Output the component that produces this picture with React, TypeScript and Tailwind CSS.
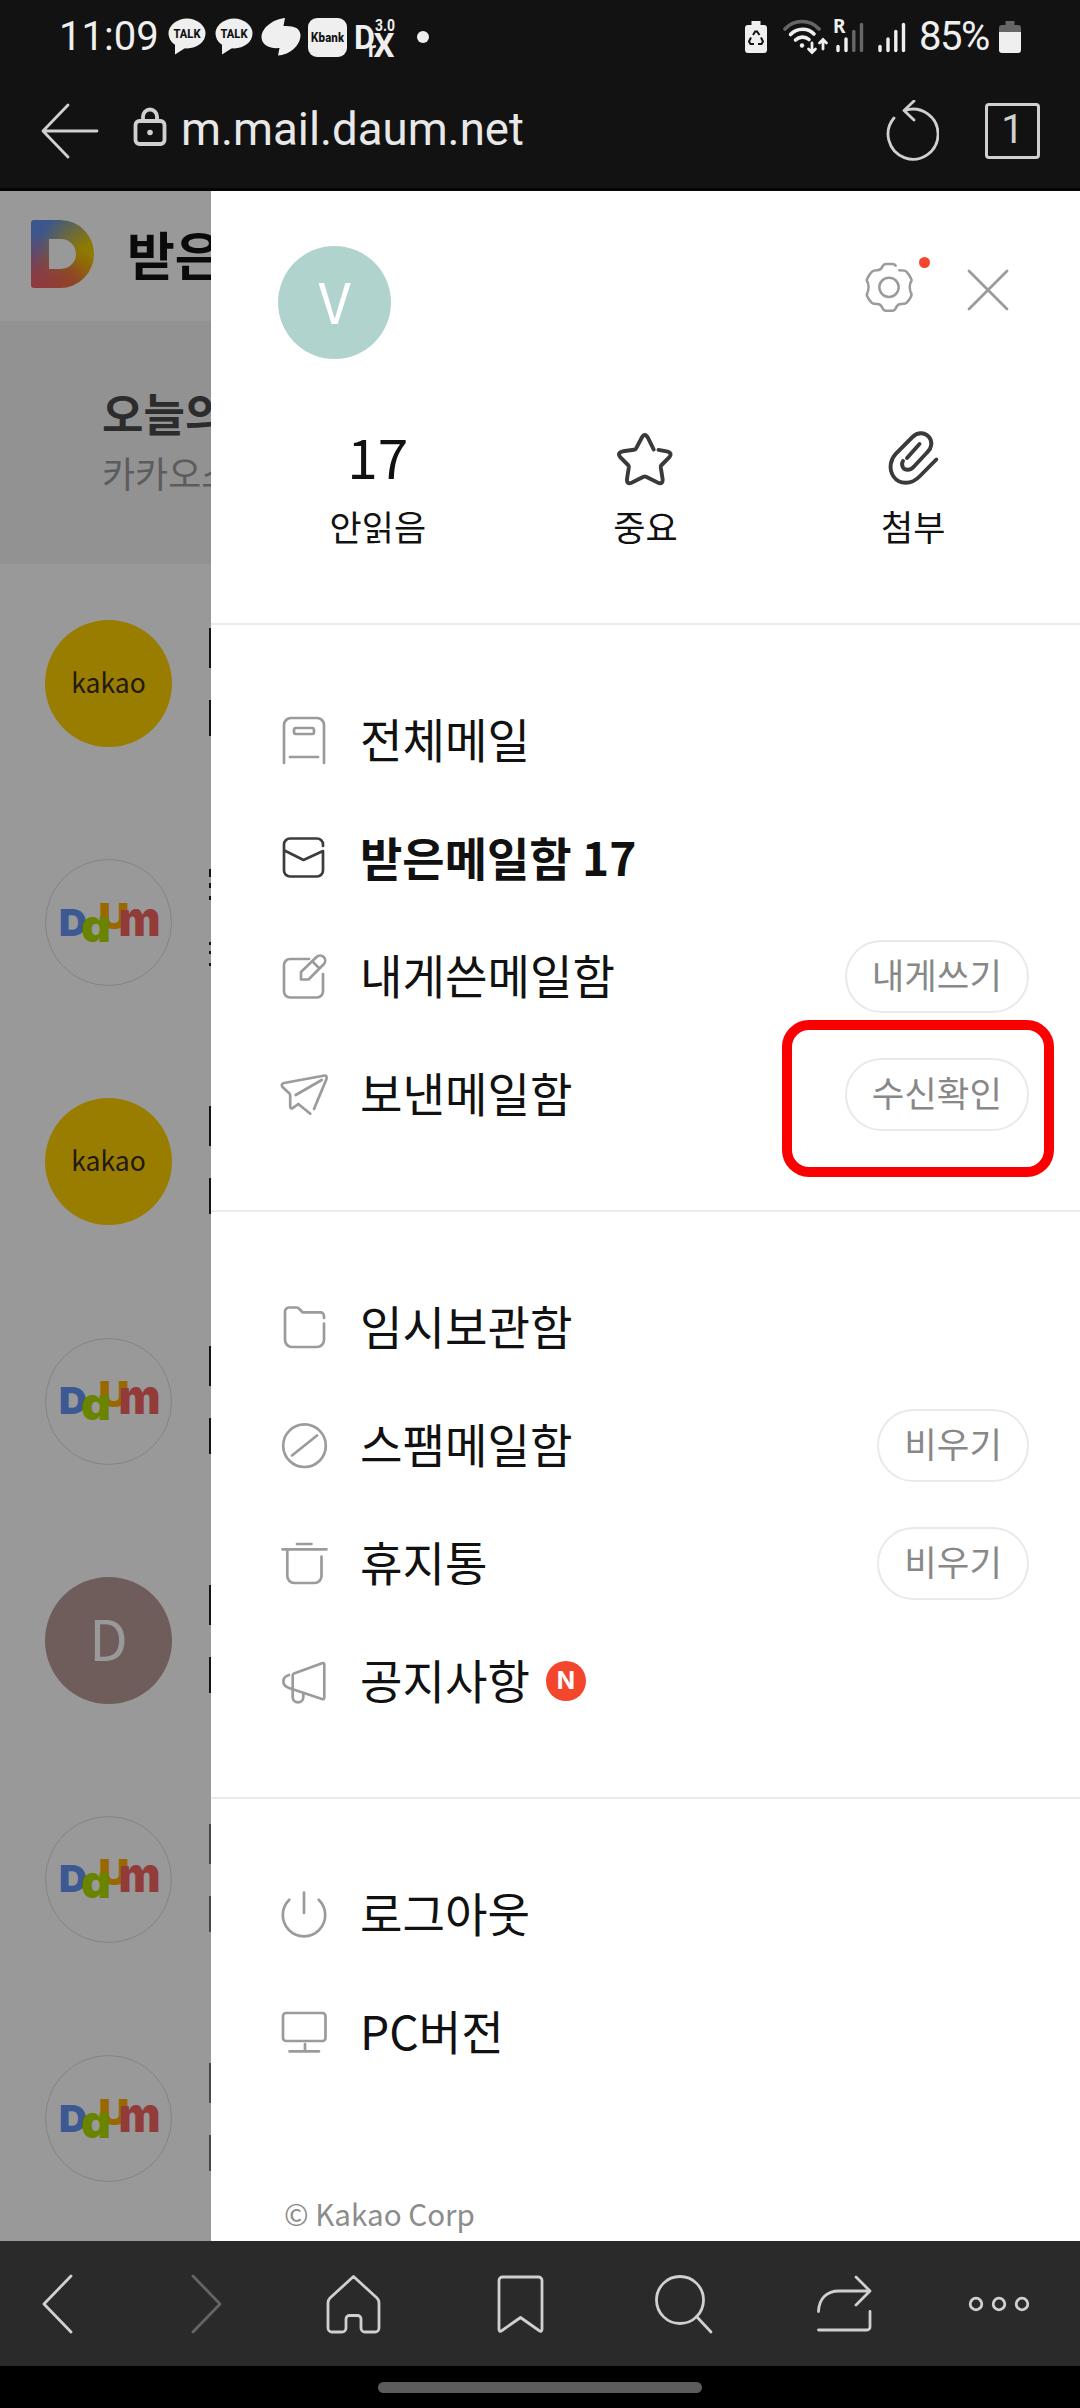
import React from "react";
import clsx from "clsx";

// --- Status bar icons ---
function TalkIcon() {
  return (
    <svg width="38" height="38" viewBox="0 0 38 38">
      <ellipse cx="19" cy="15.5" rx="18.5" ry="15" fill="#efefef" />
      <path d="M7 24v12.5l11-7z" fill="#efefef" />
      <text x="19" y="20" textAnchor="middle" textLength="27" lengthAdjust="spacingAndGlyphs" fontFamily="Roboto, sans-serif" fontWeight="800" fontSize="13.5" fill="#121212">TALK</text>
    </svg>
  );
}

function SignalBars({ level }: { level: number }) {
  return (
    <svg width="28" height="32" viewBox="0 0 28 32" strokeWidth="3.4" strokeLinecap="round">
      <path d="M2 25.5v4" stroke={level > 0 ? "#efefef" : "#666"} />
      <path d="M10 18v11.5" stroke={level > 1 ? "#efefef" : "#666"} />
      <path d="M17.8 10.5v19" stroke={level > 2 ? "#efefef" : "#666"} />
      <path d="M25.5 3.5v26" stroke={level > 3 ? "#efefef" : "#666"} />
    </svg>
  );
}

function StatusBar() {
  return (
    <div className="flex h-[74px] items-center px-[59px] font-[Roboto,sans-serif] text-[#efefef]">
      <span className="w-[109px] text-[40px] leading-none">11:09</span>
      <TalkIcon />
      <span className="ml-[9px]"><TalkIcon /></span>
      <svg className="ml-2" width="40" height="40" viewBox="0 0 40 40" fill="#efefef">
        <path d="M24 1L22.5 9C33 8.5 39 11 39.5 18C39.5 29 28 38 17 38.5L18.5 31C7 32 .5 27 .5 20C1 10 13 2 24 1Z" />
      </svg>
      <span className="ml-[7px] flex h-[39px] w-[39px] items-center justify-center rounded-[9px] bg-[#efefef]">
        <svg width="35" height="20" viewBox="0 0 35 20">
          <text x="17.5" y="14.5" textAnchor="middle" textLength="33" lengthAdjust="spacingAndGlyphs" fontFamily="Inter, sans-serif" fontWeight="800" fontSize="12.5" fill="#121212">Kbank</text>
        </svg>
      </span>
      <svg className="ml-2 overflow-visible" width="42" height="42" viewBox="0 0 42 42" fill="#efefef" fontFamily="Roboto, sans-serif" fontWeight="700">
        <text x="-1" y="33" fontSize="33" textLength="21" lengthAdjust="spacingAndGlyphs">D</text>
        <text x="20" y="15" fontSize="17" textLength="20" lengthAdjust="spacingAndGlyphs">3.0</text>
        <text x="18.5" y="41" fontSize="34" textLength="21" lengthAdjust="spacingAndGlyphs">X</text>
        <text x="13" y="41" fontSize="22">r</text>
      </svg>
      <span className="ml-[20px] h-3 w-3 rounded-full bg-[#efefef]" />
      <span className="flex-1" />
      {/* Battery saver */}
      <svg width="22" height="32" viewBox="0 0 22 32">
        <path d="M6.500 0h9v4H19a3 3 0 0 1 3 3v22a3 3 0 0 1-3 3H3a3 3 0 0 1-3-3V7a3 3 0 0 1 3-3h3.500z" fill="#efefef" />
        <path d="M8 14l2.200-3.500h1.800L14.500 14M16 16.500l2 4-1.500 2.500H13M9 23H5.500L4 20.500l2-4" stroke="#121212" strokeWidth="2" fill="none" />
      </svg>
      <svg className="ml-4" width="46" height="36" viewBox="0 0 46 36" fill="none" stroke="#efefef" strokeWidth="3.6" strokeLinecap="round">
        <path d="M2 10C11 0 27 0 36 10" stroke="#666" />
        <path d="M7.500 15.500C14 8.500 25 8.500 31 15" />
        <path d="M12.500 21C16 17.500 22 17 26 20.500" />
        <circle cx="19" cy="26.5" r="2.2" fill="#efefef" stroke="none" />
        <path d="M29 24v9M25.500 30l3.500 3.500 3.500-3.500M40 30v-9M36.500 24l3.500-3.500 3.500 3.500" strokeWidth="2.8" />
      </svg>
      <span className="relative ml-[7px]">
        <SignalBars level={2} />
        <span className="absolute -left-[3px] -top-[3px] bg-[#121212] font-['Noto_Sans',sans-serif] text-[19px] font-bold leading-[17px]">R</span>
      </span>
      <span className="ml-[14px]"><SignalBars level={4} /></span>
      <span className="ml-[13px] w-[80px] text-[40px] leading-none tracking-[-1.5px]">85%</span>
      <svg width="22" height="32" viewBox="0 0 22 32">
        <path d="M6.500 0h9v4H19a3 3 0 0 1 3 3v4H0V7a3 3 0 0 1 3-3h3.500z" fill="#666" />
        <path d="M0 11h22v18a3 3 0 0 1-3 3H3a3 3 0 0 1-3-3z" fill="#efefef" />
      </svg>
    </div>
  );
}

function AddressBar() {
  return (
    <div className="flex h-[114px] items-center pl-[40px] pr-[40px] font-[Roboto,sans-serif]">
      <svg width="60" height="56" viewBox="0 0 60 56" fill="none" stroke="#d0d0d0" strokeWidth="2.8" strokeLinecap="round" strokeLinejoin="round">
        <path d="M28 2L3 28l25 26M3 28h54" />
      </svg>
      <svg className="-mt-2 ml-[33px]" width="34" height="40" viewBox="0 0 34 40" fill="none" stroke="#d0d0d0" strokeWidth="3.8">
        <rect x="2.5" y="14" width="29" height="23" rx="4" />
        <path d="M10 14V9.500a7 7 0 0 1 14 0V14" />
        <circle cx="17" cy="25.5" r="2.8" fill="#d0d0d0" stroke="none" />
      </svg>
      <span className="-mt-[3px] ml-[14px] flex-1 text-[45.6px] leading-none text-[#e8e8e8]">m.mail.daum.net</span>
      <svg width="54" height="62" viewBox="0 0 54 62" fill="none" stroke="#d0d0d0" strokeWidth="2.8" strokeLinecap="round" strokeLinejoin="round">
        <path d="M9 18A25 25 0 1 0 20 10.500M29 1L19 10.500l10 9.500" />
      </svg>
      <span className="ml-[46px] flex h-[56px] w-[55px] items-center justify-center rounded-[4px] border-[3px] border-[#d0d0d0] pb-[2px] text-[40px] leading-none text-[#d0d0d0]">1</span>
    </div>
  );
}

// --- Mail list behind the drawer ---
function DaumLogo() {
  return (
    <svg className="overflow-visible" width="100" height="44" viewBox="0 0 100 44" fontFamily="Inter, sans-serif" fontWeight="900" strokeLinejoin="round">
      <text x="39.5" y="28" fontSize="35" textLength="31" lengthAdjust="spacingAndGlyphs" fill="#ffb000">U</text>
      <text x="0" y="35" fontSize="37" textLength="28" lengthAdjust="spacingAndGlyphs" fill="#6495f5">D</text>
      <text x="59.5" y="35" fontSize="48" textLength="42" lengthAdjust="spacingAndGlyphs" fill="#f4645f">m</text>
      <text className="[font-feature-settings:'cv11']" x="22" y="41" fontSize="45" textLength="30" lengthAdjust="spacingAndGlyphs" fill="#b2dc00">a</text>
    </svg>
  );
}

const mails = [
  { kind: "kakao", edge: "bg-[#222]" },
  { kind: "daum", edge: "bg-[#222]", broken: true },
  { kind: "kakao", edge: "bg-[#222]" },
  { kind: "daum", edge: "bg-[#222]" },
  { kind: "letter", edge: "bg-[#222]" },
  { kind: "daum", edge: "bg-[#777]" },
  { kind: "daum", edge: "bg-[#777]" },
];

function MailListBackdrop() {
  return (
    <div className="relative h-full w-[211px] shrink-0 overflow-hidden bg-white">
      <div className="flex h-[130px] items-center pb-1 pl-[31px]">
        <div className="flex h-[68px] w-[63px] shrink-0 items-center rounded-l-[3px] rounded-r-[34px] bg-[radial-gradient(circle_at_0%_105%,#ee5f6c_10%,transparent_60%),radial-gradient(circle_at_55%_110%,#f27a2c_20%,transparent_58%),radial-gradient(circle_at_105%_62%,#eccc00_25%,transparent_80%),linear-gradient(#6490ec,#8088d8)] pl-[18px]">
          <div className="h-[30px] w-[27px] rounded-r-[15px] bg-white" />
        </div>
        <span className="ml-[33px] whitespace-nowrap text-[52px] font-bold leading-none text-[#111]">받은메일함</span>
      </div>
      <div className="h-[243px] bg-[#f3f3f3] pl-[102px] pt-[65px]">
        <p className="whitespace-nowrap text-[45px] font-bold leading-[54px] text-[#4a4a4a]">오늘의 메일</p>
        <p className="mt-[6px] whitespace-nowrap text-[36px] leading-[52px] text-[#999]">카카오스토리</p>
      </div>
      {mails.map((mail, index) => (
        <div key={index} className="flex h-[239.2px] items-start justify-between pl-[45px] pt-[56px]">
          {mail.kind === "kakao" && (
            <div className="flex h-[127px] w-[127px] items-center justify-center rounded-full bg-[#ffd000] pb-[3px] text-[26.5px] leading-none text-[#3a2a1c]">
              kakao
            </div>
          )}
          {mail.kind === "daum" && (
            <div className="flex h-[127px] w-[127px] items-center justify-center rounded-full border-[1.5px] border-[#dcdcdc]">
              <DaumLogo />
            </div>
          )}
          {mail.kind === "letter" && (
            <div className="flex h-[127px] w-[127px] items-center justify-center rounded-full bg-[#b99b98] pb-[6px] text-[56px] leading-none text-white">
              D
            </div>
          )}
          {/* Sender and subject are hidden by the drawer except for their first pixels */}
          {mail.broken ? (
            <div className="mt-[10px] flex w-[2px] flex-col">
              <span className={clsx("h-[8px] w-[2px]", mail.edge)} />
              <span className={clsx("mt-[6px] h-[5px] w-[2px]", mail.edge)} />
              <span className={clsx("mt-[8px] h-[4px] w-[2px]", mail.edge)} />
              <span className={clsx("mt-[42px] h-[3px] w-[2px]", mail.edge)} />
              <span className={clsx("mt-[6px] h-[3px] w-[2px]", mail.edge)} />
              <span className={clsx("mt-[9px] h-[3px] w-[2px]", mail.edge)} />
            </div>
          ) : (
            <div className="mt-2 flex w-[2px] flex-col gap-8">
              <span className={clsx("h-[40px] w-[2px]", mail.edge)} />
              <span className={clsx("h-[36px] w-[2px]", mail.edge)} />
            </div>
          )}
        </div>
      ))}
      <div className="absolute inset-0 bg-black/40" />
    </div>
  );
}

// --- Drawer ---
const iconPaths: Record<string, React.ReactNode> = {
  all: (
    <>
      <path d="M4 46V8a7 7 0 0 1 7-7H37a7 7 0 0 1 7 7v38M10 40h28" />
      <rect x="14" y="11" width="20" height="6" rx="2" />
    </>
  ),
  inbox: <path d="M43 11V9.500a6 6 0 0 0-6-6H10a6 6 0 0 0-6 6v26a6 6 0 0 0 6 6h27a6 6 0 0 0 6-6V16L23.500 25 4.500 15.500" />,
  self: (
    <>
      <path d="M29 6H10a6 6 0 0 0-6 6v26.500a6 6 0 0 0 6 6h27a6 6 0 0 0 6-6V21" />
      <path d="M21 26.500V19L36.500 4a5 5 0 0 1 7.200 7.200L28.500 26.500zM32.500 8.500l6.500 6.500" />
    </>
  ),
  sent: <path d="M34 38L46.500 8Q47.500 4 43.500 4.800L4 12Q.5 13 2.500 16L9.500 22.500Q10.200 23.500 10.200 25V35.500Q10.500 38.500 13 36.800L18.300 33 30.300 42.700M15.700 24L41.700 9" />,
  draft: <path d="M44 14v-2a3.700 3.700 0 0 0-3.700-3.700H22.500l-3.300-3.500a3.500 3.500 0 0 0-2.500-1.300H9a4 4 0 0 0-4 4V36a7 7 0 0 0 7 7h25a7 7 0 0 0 7-7V19.500" />,
  spam: (
    <>
      <circle cx="24.5" cy="23.7" r="21.3" />
      <path d="M12 33.500L37 13.500" />
    </>
  ),
  trash: <path d="M17 4h14.500M2.500 9.300h44M7.300 9.500V36a7 7 0 0 0 7 7h20.200a7 7 0 0 0 7-7V16.500" />,
  notice: (
    <>
      <path d="M12.700 31V17.500Q12.700 16 14 15.500L42 5.200Q44.300 4.500 44.300 6.500V39.500Q44.300 41.800 42 41L9 30C1 27 2 19 9 17" />
      <path d="M12.700 30v9a5.300 5.300 0 0 0 10.600 0v-4" />
    </>
  ),
  logout: <path d="M9.300 8.800A21.200 21.200 0 1 0 38.700 8.800M24 1.500V22" />,
  pc: (
    <>
      <rect x="3" y="4" width="42.5" height="28" rx="3" />
      <path d="M25 35v7M9.500 42.300h29.500" />
    </>
  ),
};

const sections = [
  [
    { icon: "all", label: "전체메일" },
    { icon: "inbox", label: "받은메일함 17", active: true },
    { icon: "self", label: "내게쓴메일함", action: "내게쓰기" },
    { icon: "sent", label: "보낸메일함", action: "수신확인", marked: true },
  ],
  [
    { icon: "draft", label: "임시보관함" },
    { icon: "spam", label: "스팸메일함", action: "비우기" },
    { icon: "trash", label: "휴지통", action: "비우기" },
    { icon: "notice", label: "공지사항", isNew: true },
  ],
  [
    { icon: "logout", label: "로그아웃" },
    { icon: "pc", label: "PC버전" },
  ],
];

function MenuRow({ item }: any) {
  return (
    <li className="relative flex h-[118px] items-center pl-[69px] pr-[51px]">
      <svg
        className="mt-[2px] shrink-0 overflow-visible"
        width="48"
        height="48"
        viewBox="0 0 48 48"
        fill="none"
        stroke={item.active ? "#3c3c3c" : "#9b9b9b"}
        strokeWidth="2.7"
        strokeLinecap="round"
        strokeLinejoin="round"
      >
        {iconPaths[item.icon]}
      </svg>
      <span className={clsx("ml-[32px] whitespace-nowrap pb-[5px] leading-[54px] text-[#111]", item.active ? "text-[46px] font-bold" : "text-[46.2px]")}>
        {item.label}
      </span>
      {item.isNew && (
        <span className="ml-[16px] flex h-[40px] w-[40px] items-center justify-center rounded-full bg-[#f4462c] font-[Inter,sans-serif] text-[24px] font-bold leading-none text-white">
          N
        </span>
      )}
      {item.action && (
        <button className="ml-auto h-[73px] whitespace-nowrap rounded-full border-2 border-[#e8eaea] px-[25px] pb-[5px] text-[35.4px] leading-none text-[#888]">
          {item.action}
        </button>
      )}
      {item.marked && <span className="absolute -top-[15px] right-[26px] h-[157px] w-[272px] rounded-[27px] border-[10px] border-[#fb0000]" />}
    </li>
  );
}

function Drawer() {
  return (
    <aside className="flex-1 bg-white text-[#111]">
      <header className="flex items-start pl-[67px] pt-[55px]">
        <span className="flex h-[113px] w-[113px] items-center justify-center rounded-full bg-[#b0d3cd] pb-[6px] text-[56px] leading-none text-white">V</span>
        <span className="relative ml-[473px] mt-[15px]">
          <svg width="50" height="53" viewBox="134 124 150 159" fill="none" stroke="#9b9b9b" strokeWidth="7.5" strokeLinecap="round">
            <path d="M229 138Q226 133 219 133H200Q193 133 189 141Q184 152 174 152Q162 152 158 156Q150 164 144 176Q140 182 146 190Q150 203 146 215Q140 224 144 231Q150 243 158 250Q162 253 174 253Q184 253 189 264Q193 273 200 273H219Q226 273 230 264Q235 253 245 253Q257 253 261 250Q269 243 275 231Q279 224 273 215Q269 203 273 190Q279 182 275 176Q269 164 261 156Q257 152 240 152" />
            <circle cx="209" cy="203" r="29" />
          </svg>
          <span className="absolute -right-[16px] -top-[4px] h-[11px] w-[11px] rounded-full bg-[#f4462c]" />
        </span>
        <svg className="ml-[52px] mt-[22px]" width="44" height="44" viewBox="0 0 44 44" stroke="#9b9b9b" strokeWidth="2.8" strokeLinecap="round">
          <path d="M3 3l38 38M41 3L3 41" />
        </svg>
      </header>

      <div className="mt-[66px] grid h-[198px] grid-cols-3 px-[33px] text-center text-[35px]">
        <div>
          <div className="flex h-[68px] items-center justify-center pb-[8px] text-[55px] leading-none">17</div>
          <p className="mt-[7px] leading-[52px]">안읽음</p>
        </div>
        <div>
          <div className="flex h-[68px] items-center justify-center">
            <svg width="60" height="58" viewBox="0 0 60 58" fill="none" stroke="#3a3a3a" strokeWidth="3.9" strokeLinecap="round">
              <path d="M38.700 19.500L33 8Q29.800 2 26.600 8L21 18.500Q20.500 19.600 19 19.800L8 21.300Q1.500 22.500 5.500 27.500L13 35Q14 36 13.800 37.500L12 49Q11.500 55 17 52.500L28.500 46.800Q29.800 46 31.100 46.800L42.600 52.500Q48.100 55 47.600 49L45.800 37.500Q45.600 36 46.600 35L54.100 27.500Q58 22.500 51.600 21.300L43.500 19.900" />
            </svg>
          </div>
          <p className="mt-[7px] leading-[52px]">중요</p>
        </div>
        <div>
          <div className="flex h-[68px] items-center justify-center">
            <svg width="60" height="58" viewBox="0 0 60 58" fill="none" stroke="#3a3a3a" strokeWidth="3.9" strokeLinecap="round">
              <path d="M53.300 29.500L37 46C28 55.500 16 54.500 10.500 46.500C5 38 8 29 13 23.500L29.500 7C35 1.500 42 2.500 46 7C50 12 48.500 18 44.500 22L31 36.500C27 41 22 40.500 20 37.500C18.500 35 18.700 33 20 31M36.500 14L24 28" />
            </svg>
          </div>
          <p className="mt-[7px] leading-[52px]">첨부</p>
        </div>
      </div>

      {sections.map((items, index) => (
        <ul key={index} className="border-t-2 border-[#ebebeb] pb-[57px] pt-[56px]">
          {items.map((item) => (
            <MenuRow key={item.label} item={item} />
          ))}
        </ul>
      ))}

      <p className="mt-[46px] pl-[73px] text-[29.6px] leading-[40px] text-[#8c8c8c]">© Kakao Corp</p>
    </aside>
  );
}

// --- Browser toolbar ---
function BottomBar() {
  return (
    <nav className="flex h-[125px] shrink-0 items-center bg-[#2a2a2a] pl-[41px] [&>svg]:fill-none [&>svg]:stroke-[#d0d0d0] [&>svg]:stroke-[2.8px]">
      <svg width="33" height="60" viewBox="0 0 33 60" strokeLinecap="round" strokeLinejoin="round">
        <path d="M30 2L3 30l27 28" />
      </svg>
      <svg className="ml-[116px] opacity-35" width="33" height="60" viewBox="0 0 33 60" strokeLinecap="round" strokeLinejoin="round">
        <path d="M3 2l27 28L3 58" />
      </svg>
      <svg className="ml-[102px]" width="57" height="60" viewBox="0 0 57 60" strokeLinejoin="round">
        <path d="M28.500 2.500L5 24Q3 26 3 29V54a4 4 0 0 0 4 4h10a4 4 0 0 0 4-4V45a3.500 3.500 0 0 1 3.500-3.500h8A3.500 3.500 0 0 1 36 45v9a4 4 0 0 0 4 4h10a4 4 0 0 0 4-4V29Q54 26 52 24Z" />
      </svg>
      <svg className="ml-[114px]" width="49" height="60" viewBox="0 0 49 60" strokeLinejoin="round">
        <path d="M3 55V6.500a3.500 3.500 0 0 1 3.500-3.500h36A3.500 3.500 0 0 1 46 6.500V55Q46 58.500 43 56.500L24.500 43.500 6 56.500Q3 58.500 3 55Z" />
      </svg>
      <svg className="ml-[109px]" width="60" height="60" viewBox="0 0 60 60" strokeLinecap="round">
        <circle cx="26" cy="26" r="23.5" />
        <path d="M42.500 42.500L57 58" />
      </svg>
      <svg className="ml-[102px]" width="56" height="60" viewBox="0 0 56 60" strokeLinecap="round" strokeLinejoin="round">
        <path d="M2.500 37.500C3 24 11 17 23 17H54M40 3l14 14-14 14M54 37.500V53a3 3 0 0 1-3 3H2.500" />
      </svg>
      <svg className="ml-[96px]" width="62" height="20" viewBox="0 0 62 20">
        <circle cx="8" cy="10" r="5.8" />
        <circle cx="31" cy="10" r="5.8" />
        <circle cx="54" cy="10" r="5.8" />
      </svg>
    </nav>
  );
}

export default function App() {
  return (
    <div className="flex h-[2408px] w-[1080px] flex-col overflow-hidden bg-black font-['Noto_Sans_CJK_KR',sans-serif]">
      <div className="h-[191px] shrink-0 border-b-[3px] border-[#050505] bg-[#121212]">
        <StatusBar />
        <AddressBar />
      </div>
      <main className="flex h-[2050px] shrink-0 overflow-hidden">
        <MailListBackdrop />
        <Drawer />
      </main>
      <BottomBar />
      <div className="flex flex-1 items-center justify-center">
        <div className="h-[11px] w-[324px] rounded-full bg-[#5c5c5c]" />
      </div>
    </div>
  );
}
